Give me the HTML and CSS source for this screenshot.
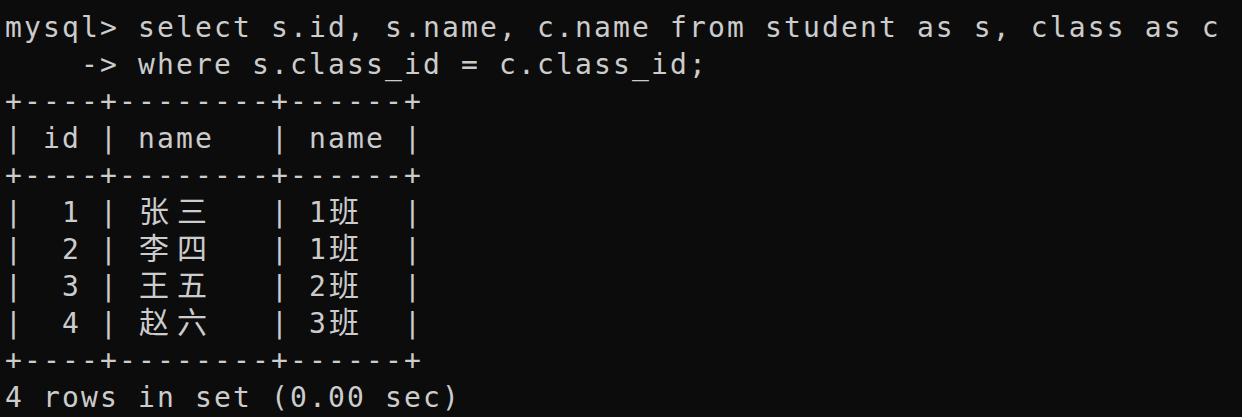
FILE: index.html
```html
<!DOCTYPE html>
<html lang="zh">
<head>
<meta charset="utf-8">
<title>mysql</title>
<link rel="stylesheet" href="styles.css">
</head>
<body>
<div class="term">
<div class="ln">mysql&gt; select s.id, s.name, c.name from student as s, class as c</div>
<div class="ln">    -&gt; where s.class_id = c.class_id;</div>
<div class="ln">+----+--------+------+</div>
<div class="ln">| id | name   | name |</div>
<div class="ln">+----+--------+------+</div>
<div class="ln">|  1 | <span class="w">张</span><span class="w">三</span>   | 1<span class="w">班</span>  |</div>
<div class="ln">|  2 | <span class="w">李</span><span class="w">四</span>   | 1<span class="w">班</span>  |</div>
<div class="ln">|  3 | <span class="w">王</span><span class="w">五</span>   | 2<span class="w">班</span>  |</div>
<div class="ln">|  4 | <span class="w">赵</span><span class="w">六</span>   | 3<span class="w">班</span>  |</div>
<div class="ln">+----+--------+------+</div>
<div class="ln">4 rows in set (0.00 sec)</div>
</div>
</body>
</html>
```

FILE: styles.css
```css
html, body {
  margin: 0;
  padding: 0;
  background: #0c0c0c;
}
.term {
  padding: 9px 0 0 5px;
  color: #cccccc;
  font-family: "DejaVu Sans Mono", monospace;
  font-size: 28px;
  letter-spacing: 2.14px;
  height: 417px;
  box-sizing: border-box;
  overflow: hidden;
}
.ln {
  white-space: pre;
  height: 37px;
  line-height: 37px;
}
.w {
  display: inline-block;
  width: 38px;
  letter-spacing: 0;
  padding-left: 1px;
  box-sizing: border-box;
  font-family: "Noto Sans CJK SC", "DejaVu Sans", sans-serif;
  font-size: 30px;
  line-height: 30px;
}
```
